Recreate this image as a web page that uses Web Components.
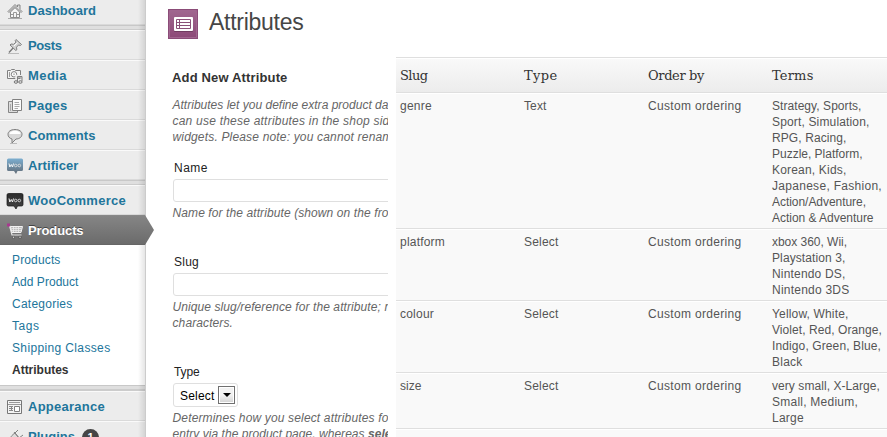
<!DOCTYPE html>
<html lang="en"><head><meta charset="utf-8"><title>Attributes</title>
<style>html,body{margin:0;height:437px;overflow:hidden;background:#fff;font:12px/16px "Liberation Sans",Arial,sans-serif}</style></head>
<body><admin-page></admin-page>
<script>
const icons={
home:'<path d="M1 8.5 8 1.5l2.5 2.5V2H13v4.5l2 2-1 1L8 3.5 2 9.5z" fill="#ddd" stroke="#858585"/><path d="M3.5 9 8 4.7 12.5 9v5.5h-9z" fill="#f6f6f6" stroke="#8c8c8c"/><path d="M6.5 14V9.5h3V14M4 11.5h2M10 11.5h2" fill="none" stroke="#999"/><path d="M1 15.5h14" stroke="#aaa"/>',
pin:'<path d="M1 15.5h11" stroke="#bbb"/><path d="M2 14.5 7 9" stroke="#777" stroke-width="1.3"/><path d="m9 1.5 5.5 5-1 1-2-.5-2 2.2.3 2.6-1 .7L3 7l1-1 2.6.3L9 4.2 8.2 2.5z" fill="#d2d2d2" stroke="#808080"/><path d="m7 8 3.5-3.3" stroke="#fff"/>',
media:'<path d="M.5 2.5h3l1-1h3l1 1h5v8H.5z" fill="#f2f2f2" stroke="#808080"/><circle cx="7" cy="6.3" r="2.7" fill="#fff" stroke="#808080"/><circle cx="7" cy="6.3" r="1" fill="#bbb"/><path d="M2.5 4v5" stroke="#999"/><path d="M9.7 14V8.5h4.8V13" fill="none" stroke="#ececec" stroke-width="3"/><path d="M10.500 13.500v-5h4.500v4.500M10 10h4.500" fill="none" stroke="#808080"/><ellipse cx="8.9" cy="14" rx="1.700" ry="1.300" fill="#ddd" stroke="#777"/><ellipse cx="13.400" cy="14" rx="1.700" ry="1.300" fill="#ddd" stroke="#777"/>',
pages:'<path d="M1.500 3.500h9v11h-9z" fill="#ddd" stroke="#858585"/><path d="M5.500 1.500h9v11h-9z" fill="#fbfbfb" stroke="#808080"/><path d="M7.500 4.500H12M7.500 6.500h5M7.500 8.500h5M7.500 10.500H11M3.500 6v7" stroke="#aaa"/>',
comment:'<path d="M3 15.500h7" stroke="#bbb"/><path d="M8 1.500c4.300 0 7 2 7 4.700s-2.500 4.800-6 4.800L5 15v-4C2.300 10.200 1 8.500 1 6.300c0-2.800 2.700-4.800 7-4.800z" fill="#d8d8d8" stroke="#808080"/><path d="M2.500 6c0-2 2-3.300 5.500-3.300S13.500 4 13.500 6" fill="#fff"/>',
appearance:'<path d="M.5 1.500h14v13H.500z" fill="#f4f4f4" stroke="#777"/><path d="M2 3.500h11M1 5.500h13" stroke="#999"/><path d="M7.500 7.500h5v5h-5z" fill="#fff" stroke="#808080"/><path d="M2 7.500h4M2 9.500h4M2 11.500h4M4.500 7v5" stroke="#888"/>',
plug:'<path d="m1 15 3-3m0 0c-2-3 1-6 4-8l4 5c-2 3-5 5-8 3zm4-8 3-3m1 8 4-3M7 3l6 7" fill="#ddd" stroke="#808080"/>',
cart:'<path d="M1 2.500h1.500l2.500 9.500h9.500" fill="none" stroke="#e8e8e8" stroke-width="1.200"/><path d="M3.300 3.500h12.200l-1.500 6H5z" fill="#bbb" stroke="#f2f2f2"/><path d="M4.500 5.500h10M5 7.500h9M6.500 4v5M9 4v5M11.500 4v5" stroke="#eee" stroke-width=".8"/><path d="M0 .5h3v3H0z" fill="#a9378f"/><path d="M5.500 13.300h2v2h-2zM12 13.300h2v2h-2z" fill="#ddd" stroke="#444" stroke-width=".6"/>'};
const woo=c=>`<linearGradient id="g" x2="0" y2="1"><stop stop-color="${c?'#7caed0':'#2c2c2c'}"/><stop offset="1" stop-color="${c?'#626c77':'#454545'}"/></linearGradient><path d="M1.500.5h13a1.500 1.500 0 0 1 1.500 1.500v9.500a1.500 1.500 0 0 1-1.500 1.500h-4l-1.500 3-2-3H1.500A1.500 1.500 0 0 1 0 11.500V2A1.500 1.500 0 0 1 1.500.5z" fill="url(#g)" ${c?'':'stroke="#111" stroke-width=".7"'}/><path d="m2 5.500.8 3.500L4.300 6.500 5.500 9l1-3.500" fill="none" stroke="#fff" stroke-width=".9"/><circle cx="8.700" cy="7.500" r="1.300" fill="none" stroke="#ddd" stroke-width=".9"/><circle cx="12.300" cy="7.500" r="1.300" fill="none" stroke="#ddd" stroke-width=".9"/>`;
const define=(n,css,html,after)=>customElements.define(n,class extends HTMLElement{connectedCallback(){if(this.shadowRoot)return;this.attachShadow({mode:'open'}).innerHTML=`<style>${css}</style>`+(typeof html=='function'?html(this):html);after&&after(this)}});
// A single line of text whose tracking is adjusted to a given advance width.
define('fit-text',':host{display:block;width:max-content;white-space:pre;padding-top:1px;margin-bottom:-1px}','<slot></slot>',e=>{const w=+e.getAttribute('w');if(w){const n=e.textContent.length;e.style.letterSpacing=(w-e.getBoundingClientRect().width)/n+'px'}});
const T=(t,w)=>`<fit-text w="${w}">${t}</fit-text>`;
define('menu-icon',':host{display:block;width:16px;height:16px;margin-top:2px}svg{display:block;overflow:visible}',e=>{const n=e.getAttribute('name');return `<svg width="16" height="16" viewBox="0 0 16 16">${n=='woo1'?woo(1):n=='woo2'?woo(0):icons[n]}</svg>`});
define('menu-item',`:host{display:flex;box-sizing:border-box;height:30px;align-items:center;gap:5px;padding:0 0 0 7px;border-top:1px solid #fafafa;border-bottom:1px solid #dadada;font-weight:bold;font-size:13px;color:#21759b}
:host([active]){position:relative;color:#fff;border-color:#888 #fff0 #666 #fff0;border-left:0;border-right:0;background:linear-gradient(#858585,#6b6b6b);text-shadow:0 -1px #444;z-index:2}
:host([active])::after{content:"";position:absolute;left:145px;top:-1px;width:9px;height:30px;background:linear-gradient(#858585,#6b6b6b);clip-path:polygon(0 0,100% 50%,0 100%)}`,e=>`<menu-icon name="${e.getAttribute('icon')}"></menu-icon><slot></slot>`);
define('menu-gap',':host{display:block;box-sizing:border-box;height:5px;background:#dfdfdf;border-top:1px solid #c8c8c8;border-bottom:1px solid #ccc}','');
define('sub-menu',':host{display:flex;flex-direction:column;box-sizing:border-box;gap:6px;background:#fff;padding:6px 0 0 12px;height:140px;color:#21759b}fit-text{height:16px}.cur{font-weight:bold;color:#333}',()=>T('Products',48.500)+T('Add Product',66.500)+T('Categories',60.500)+T('Tags',27.500)+T('Shipping Classes',98.500)+`<div class="cur">${T('Attributes',56.500)}</div>`);
const M=(i,t,w,x='')=>`<menu-item icon="${i}" ${x}>${T(t,w)}</menu-item>`;
define('side-bar',`:host{display:block;position:relative;width:145px;height:437px;background:#ececec;border-right:1px solid #ccc;margin-right:8px}
.edge{position:absolute;right:0;top:0;bottom:0;width:7px;background:linear-gradient(90deg,#0000,#0000001a);z-index:1}
.first{display:block;margin-top:-5px}.badge{width:17px;height:17px;margin:2px 0 0 2px;border-radius:9px;background:#464646;color:#fff;font-size:11px;line-height:17px;text-align:center}`,()=>`<div class="first">${M('home','Dashboard',68)}</div><menu-gap></menu-gap>${M('pin','Posts',33.500)+M('media','Media',39)+M('pages','Pages',39.500)+M('comment','Comments',67.500)+M('woo1','Artificer',50.500)}<menu-gap></menu-gap>${M('woo2','WooCommerce',98)+M('cart','Products',55.500,'active')}<sub-menu></sub-menu><menu-gap></menu-gap><div style="height:1px;background:#ccc"></div>${M('appearance','Appearance',77)}<menu-item icon="plug">${T('Plugins',47)}<span class="badge">1</span></menu-item><div class="edge"></div>`);
define('page-title',':host{display:flex;height:57px;padding:9px 0 0 14px;box-sizing:border-box;gap:11px;color:#464646;font-size:23px;line-height:27px}svg{display:block}',()=>`<svg width="30" height="30"><defs><linearGradient id="p" x2="0" y2="1"><stop stop-color="#a0668f"/><stop offset="1" stop-color="#8d4a78"/></linearGradient></defs><path d="M0 0h30v30H0z" fill="#8b4c78"/><path d="M1.500 1.500h27v27h-27z" fill="url(#p)" stroke="#a0658f"/><rect x="6" y="9" width="19" height="14" rx="1" fill="#713b61"/><rect x="6" y="8" width="19" height="14" rx="1" fill="#fff"/><path d="M8.500 10.500h14v9h-14zM8.500 13.500h14M8.500 16.500h14M11.500 10.500v9" fill="none" stroke="#8b5079"/></svg><div style="margin-top:-1px">${T('Attributes',94.500)}</div>`);
define('text-box',':host{display:block;box-sizing:border-box;width:240px;height:23px;margin:4px 0 2px;border:1px solid #dfdfdf;border-radius:3px;background:#fff}','');
define('type-select',':host{display:flex;box-sizing:border-box;width:65px;height:24px;margin:4px 0 2px;border:1px solid #dfdfdf;border-radius:3px;padding:2px 2px 2px 6px;justify-content:space-between;line-height:18px;color:#000}.b{box-sizing:border-box;width:17px;height:18px;border:1px solid #707070;background:linear-gradient(#f2f2f2 50%,#d2d2d2);box-shadow:inset 0 0 0 1px #fff;display:grid;place-items:center}i{border:4px solid transparent;border-top-color:#000;border-bottom:0}',()=>T('Select',34.500)+'<span class="b"><i></i></span>');
define('attribute-form',`:host{display:block;box-sizing:border-box;width:234px;height:380px;overflow:hidden;padding:12px 0 0 18px}h3{margin:0 0 11px;font-size:13px;line-height:16px;color:#333}.hint{padding-left:.5px;font-style:italic;color:#666}.label{padding-left:2px;color:#222}.field{height:94px}.name{margin-top:15px}.type{margin-top:16px}text-box,type-select{margin-left:1px}`,()=>`<h3>${T('Add New Attribute',115.500)}</h3><div class="hint">${T('Attributes let you define extra product da',216)+T('can use these attributes in the shop sid',217)+T('widgets. Please note: you cannot renam',220)}</div>
<div class="field name"><div class="label">${T('Name',34)}</div><text-box></text-box><div class="hint">${T('Name for the attribute (shown on the fro',216)}</div></div>
<div class="field"><div class="label">${T('Slug',25)}</div><text-box></text-box><div class="hint">${T('Unique slug/reference for the attribute; m',222)+T('characters.',60.500)}</div></div>
<div class="type"><div class="label">${T('Type',25.500)}</div><type-select></type-select><div class="hint">${T('Determines how you select attributes fo',216)}<fit-text w="219">entry via the product page, whereas <b>sele</b></fit-text></div></div>`);
define('table-row',`:host{display:grid;grid-template-columns:repeat(4,124px);padding:3px 0 3px 4px;border-top:1px solid #fff;border-bottom:1px solid #dfdfdf;background:#f9f9f9;color:#555}
:host([head]){box-sizing:border-box;height:35px;padding-top:7px;background:linear-gradient(#f9f9f9,#ececec);color:#333;font:13px/18px "DejaVu Serif",serif}`,'<slot></slot>');
const R=(a,aw,b,bw,ts)=>`<table-row>${T(a,aw)+T(b,bw)+T('Custom ordering',93.500)}<div>${ts.map(x=>T(...x)).join('')}</div></table-row>`;
define('attribute-table',':host{display:block;height:380px;box-sizing:border-box;background:#f9f9f9;border-top:1px solid #dfdfdf;margin-left:8px;overflow:hidden;flex:1}',()=>`<table-row head>${T('Slug',27.500)+T('Type',33.500)+T('Order by',56)+T('Terms',41.500)}</table-row>`+
R('genre',32,'Text',22.500,[['Strategy, Sports,',89.500],['Sport, Simulation,',97.500],['RPG, Racing,',74.500],['Puzzle, Platform,',90.500],['Korean, Kids,',74.500],['Japanese, Fashion,',110],['Action/Adventure,',94],['Action &amp; Adventure',101.500]])+
R('platform',45,'Select',34.500,[['xbox 360, Wii,',75],['Playstation 3,',73.500],['Nintendo DS,',73.500],['Nintendo 3DS',77.500]])+
R('colour',34,'Select',34.500,[['Yellow, White,',76.500],['Violet, Red, Orange,',110],['Indigo, Green, Blue,',109],['Black',30.500]])+
R('size',21.500,'Select',34.500,[['very small, X-Large,',108],['Small, Medium,',86],['Large',32]])+'<div style="height:1px;background:#fff"></div>');
define('admin-page',':host{display:flex;width:887px;height:437px;overflow:hidden}main{flex:1;min-width:0}.cols{display:flex}',"<side-bar></side-bar><main><page-title></page-title><div class='cols'><attribute-form></attribute-form><attribute-table></attribute-table></div></main>");
</script></body></html>
